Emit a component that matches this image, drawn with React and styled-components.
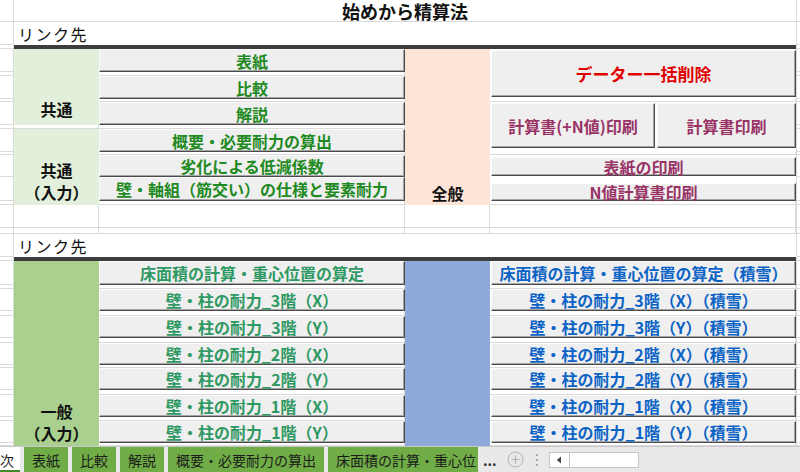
import React from 'react';
import styled, { createGlobalStyle, css } from 'styled-components';

const FONT = `"Noto Sans CJK JP", "Noto Sans", sans-serif`;

const GlobalStyle = createGlobalStyle`
  html, body { margin: 0; padding: 0; background: #fff; }
  body { font-family: ${FONT}; overflow: hidden; }
`;

const rowHeights = [
  22, 23, 4,
  23, 4, 23, 3, 23, 4, 23, 3, 22, 24, 4,
  23, 6, 23, 4,
  24, 4, 22, 5, 22, 5, 22, 3, 22, 5, 22, 4, 22, 3,
];

const C = {
  green1: '#1f8a1f',
  purple: '#993366',
  red: '#e00000',
  teal: '#2f9963',
  blue: '#0b63c5',
  lightGreen: '#e2efda',
  peach: '#fce4d6',
  green2: '#a9d08e',
  blue2: '#8eaadb',
  grid: '#dadada',
};

const area = css`
  grid-row: ${(p) => p.$r} / span ${(p) => p.$rs || 1};
  grid-column: ${(p) => p.$c} / span ${(p) => p.$cs || 1};
  min-height: 0;
  min-width: 0;
`;

const Page = styled.div`
  width: 800px;
  height: 472px;
  display: flex;
  flex-direction: column;
  overflow: hidden;
  font-family: ${FONT};
`;

const Sheet = styled.div`
  flex: none;
  display: grid;
  grid-template-columns: 14px 85px 306px 85px 306px 4px;
  grid-template-rows: ${rowHeights.map((h) => `${h}px`).join(' ')};
`;

const GridCell = styled.div`
  ${area}
  box-sizing: border-box;
  border-bottom: 1px solid ${C.grid};
  ${(p) => (p.$leftLine ? `border-left: 1px solid ${C.grid};` : `border-right: 1px solid ${C.grid};`)}
`;

const TitleCell = styled.div`
  ${area}
  box-sizing: border-box;
  display: flex;
  align-items: center;
  justify-content: center;
  border-bottom: 1px solid ${C.grid};
  font-weight: 700;
  font-size: 18px;
  line-height: 1;
  color: #111;
`;

const LinkCell = styled.div`
  ${area}
  display: flex;
  align-items: flex-end;
  padding: 0 0 3px 4px;
  font-size: 16px;
  line-height: 1;
  letter-spacing: 1.5px;
  color: #111;
`;

const ThickRule = styled.div`
  ${area}
  background: #3d3d3d;
`;

const LabelCell = styled.div`
  ${area}
  box-sizing: border-box;
  background: ${(p) => p.$bg};
  display: flex;
  flex-direction: column;
  justify-content: flex-end;
  align-items: center;
  gap: ${(p) => p.$gap ?? 6}px;
  padding-bottom: ${(p) => p.$pb ?? 5}px;
  font-weight: 700;
  font-size: 16px;
  line-height: 1;
  color: #111;
`;

const ButtonCell = styled.div`
  ${area}
  box-sizing: border-box;
  display: flex;
  gap: 2px;
  padding: ${(p) => p.$pad || '0'};
`;

const SheetButton = styled.div`
  flex: ${(p) => p.$flex || 1};
  box-sizing: border-box;
  display: flex;
  align-items: center;
  justify-content: center;
  background: #efefef;
  border: 1px solid;
  border-color: #fbfbfb #4a4a4a #4a4a4a #fbfbfb;
  box-shadow: inset -1px -1px 0 #a5a5a5;
  color: ${(p) => p.$color};
  font-weight: 700;
  font-size: ${(p) => p.$size || 16}px;
  line-height: 1;
  white-space: nowrap;
`;

/* ---------- tab bar ---------- */

const TabBar = styled.div`
  flex: 1;
  display: flex;
  align-items: stretch;
  background: #e9e9e9;
  border-top: 1px solid #c9c9c9;
  font-size: 14px;
  line-height: 1;
`;

const TabStrip = styled.div`
  flex: none;
  width: 478px;
  display: flex;
  gap: 4px;
  overflow: hidden;
`;

const SheetTab = styled.div`
  flex: ${(p) => (p.$last ? '1 1 auto' : 'none')};
  min-width: 0;
  overflow: hidden;
  display: flex;
  align-items: center;
  padding: 0 ${(p) => (p.$last ? 0 : 8)}px 0 8px;
  background: #70ad47;
  color: #1b1b1b;
  white-space: nowrap;
  ${(p) =>
    p.$active &&
    css`
      margin-left: -20px;
      padding: 0 6px;
      background: #fff;
      box-shadow: inset 0 -2px 0 #3f8a2c;
    `}
`;

const Tools = styled.div`
  flex: 1;
  display: flex;
  align-items: center;
  color: #7a7a7a;
`;

const Ellipsis = styled.span`
  margin-left: 5px;
  font-size: 14px;
  font-weight: 700;
  color: #333;
`;

const IconWrap = styled.span`
  display: flex;
  margin-left: ${(p) => p.$ml}px;
`;

const ScrollBox = styled.div`
  margin-left: 10px;
  width: 90px;
  height: 16px;
  box-sizing: border-box;
  display: flex;
  background: #fff;
  border: 1px solid #c6c6c6;
`;

const ScrollArrow = styled.div`
  width: 19px;
  display: flex;
  align-items: center;
  justify-content: center;
  border-right: 1px solid #c6c6c6;
`;

const sec1Left = [
  { r: 4, t: '表紙' },
  { r: 6, t: '比較' },
  { r: 8, t: '解説' },
  { r: 10, t: '概要・必要耐力の算出' },
  { r: 12, t: '劣化による低減係数' },
  { r: 13, t: '壁・軸組（筋交い）の仕様と要素耐力' },
];

const sec2Rows = [19, 21, 23, 25, 27, 29, 31];
const sec2Left = [
  '床面積の計算・重心位置の算定',
  '壁・柱の耐力_3階（X）',
  '壁・柱の耐力_3階（Y）',
  '壁・柱の耐力_2階（X）',
  '壁・柱の耐力_2階（Y）',
  '壁・柱の耐力_1階（X）',
  '壁・柱の耐力_1階（Y）',
];
const sec2Right = [
  '床面積の計算・重心位置の算定（積雪）',
  '壁・柱の耐力_3階（X）（積雪）',
  '壁・柱の耐力_3階（Y）（積雪）',
  '壁・柱の耐力_2階（X）（積雪）',
  '壁・柱の耐力_2階（Y）（積雪）',
  '壁・柱の耐力_1階（X）（積雪）',
  '壁・柱の耐力_1階（Y）（積雪）',
];

const spacerC = [5, 7, 9, 11, 14, 20, 22, 24, 26, 28, 30, 32];
const spacerE = [7, 11, 14, 20, 22, 24, 26, 28, 30, 32];

const tabs = ['表紙', '比較', '解説', '概要・必要耐力の算出', '床面積の計算・重心位'];

export default function App() {
  return (
    <Page>
      <GlobalStyle />
      <Sheet>
        {rowHeights.map((_, i) => (
          <React.Fragment key={`g${i}`}>
            <GridCell $r={i + 1} $c={1} />
            <GridCell $r={i + 1} $c={6} $leftLine />
          </React.Fragment>
        ))}

        <TitleCell $r={1} $c={2} $cs={4}>始めから精算法</TitleCell>
        <LinkCell $r={2} $c={2} $cs={4}>リンク先</LinkCell>
        <ThickRule $r={3} $c={2} $cs={4} />

        {/* section 1 */}
        <LabelCell $r={4} $rs={5} $c={2} $bg={C.lightGreen} $pb={8}>
          <span>共通</span>
        </LabelCell>
        <GridCell $r={9} $c={2} />
        <LabelCell $r={10} $rs={5} $c={2} $bg={C.lightGreen} $pb={5}>
          <span>共通</span>
          <span>（入力）</span>
        </LabelCell>
        <LabelCell $r={4} $rs={11} $c={4} $bg={C.peach} $pb={4}>
          <span>全般</span>
        </LabelCell>

        {sec1Left.map((b) => (
          <ButtonCell key={b.t} $r={b.r} $c={3}>
            <SheetButton $color={C.green1}>{b.t}</SheetButton>
          </ButtonCell>
        ))}

        <ButtonCell $r={4} $rs={3} $c={5} $pad="1px 0 2px 1px">
          <SheetButton $color={C.red} $size={17}>データー一括削除</SheetButton>
        </ButtonCell>
        <ButtonCell $r={8} $rs={3} $c={5} $pad="1px 0 4px 1px">
          <SheetButton $color={C.purple} $flex="0 0 164px">計算書(+N値)印刷</SheetButton>
          <SheetButton $color={C.purple}>計算書印刷</SheetButton>
        </ButtonCell>
        <ButtonCell $r={12} $c={5} $pad="2px 0 1px 1px">
          <SheetButton $color={C.purple}>表紙の印刷</SheetButton>
        </ButtonCell>
        <ButtonCell $r={13} $c={5} $pad="6px 0 0 1px">
          <SheetButton $color={C.purple}>N値計算書印刷</SheetButton>
        </ButtonCell>

        {spacerC.map((r) => (
          <GridCell key={`sc${r}`} $r={r} $c={3} />
        ))}
        {spacerE.map((r) => (
          <GridCell key={`se${r}`} $r={r} $c={5} />
        ))}

        {[15, 16].map((r) =>
          [2, 3, 4, 5].map((c) => <GridCell key={`w${r}-${c}`} $r={r} $c={c} />)
        )}

        <LinkCell $r={17} $c={2} $cs={4}>リンク先</LinkCell>
        <ThickRule $r={18} $c={2} $cs={4} />

        {/* section 2 */}
        <LabelCell $r={19} $rs={14} $c={2} $bg={C.green2} $pb={5}>
          <span>一般</span>
          <span>（入力）</span>
        </LabelCell>
        <LabelCell $r={19} $rs={14} $c={4} $bg={C.blue2} />

        {sec2Rows.map((r, i) => (
          <React.Fragment key={`s2${r}`}>
            <ButtonCell $r={r} $c={3}>
              <SheetButton $color={C.teal}>{sec2Left[i]}</SheetButton>
            </ButtonCell>
            <ButtonCell $r={r} $c={5} $pad="0 0 0 1px">
              <SheetButton $color={C.blue}>{sec2Right[i]}</SheetButton>
            </ButtonCell>
          </React.Fragment>
        ))}
      </Sheet>

      <TabBar>
        <TabStrip>
          <SheetTab $active>目次</SheetTab>
          {tabs.map((t, i) => (
            <SheetTab key={t} $last={i === tabs.length - 1}>{t}</SheetTab>
          ))}
        </TabStrip>
        <Tools>
          <Ellipsis>...</Ellipsis>
          <IconWrap $ml={10}>
            <svg width="17" height="17" viewBox="0 0 17 17">
              <circle cx="8.5" cy="8.5" r="7.5" fill="none" stroke="#b3b3b3" strokeWidth="1" />
              <path d="M8.5 4.5v8M4.5 8.5h8" stroke="#b3b3b3" strokeWidth="1.2" />
            </svg>
          </IconWrap>
          <IconWrap $ml={11}>
            <svg width="4" height="14" viewBox="0 0 4 14">
              <circle cx="2" cy="2" r="1.1" fill="#9a9a9a" />
              <circle cx="2" cy="7" r="1.1" fill="#9a9a9a" />
              <circle cx="2" cy="12" r="1.1" fill="#9a9a9a" />
            </svg>
          </IconWrap>
          <ScrollBox>
            <ScrollArrow>
              <svg width="6" height="8" viewBox="0 0 6 8">
                <path d="M5 0.5v7L0.8 4z" fill="#444" />
              </svg>
            </ScrollArrow>
          </ScrollBox>
        </Tools>
      </TabBar>
    </Page>
  );
}
